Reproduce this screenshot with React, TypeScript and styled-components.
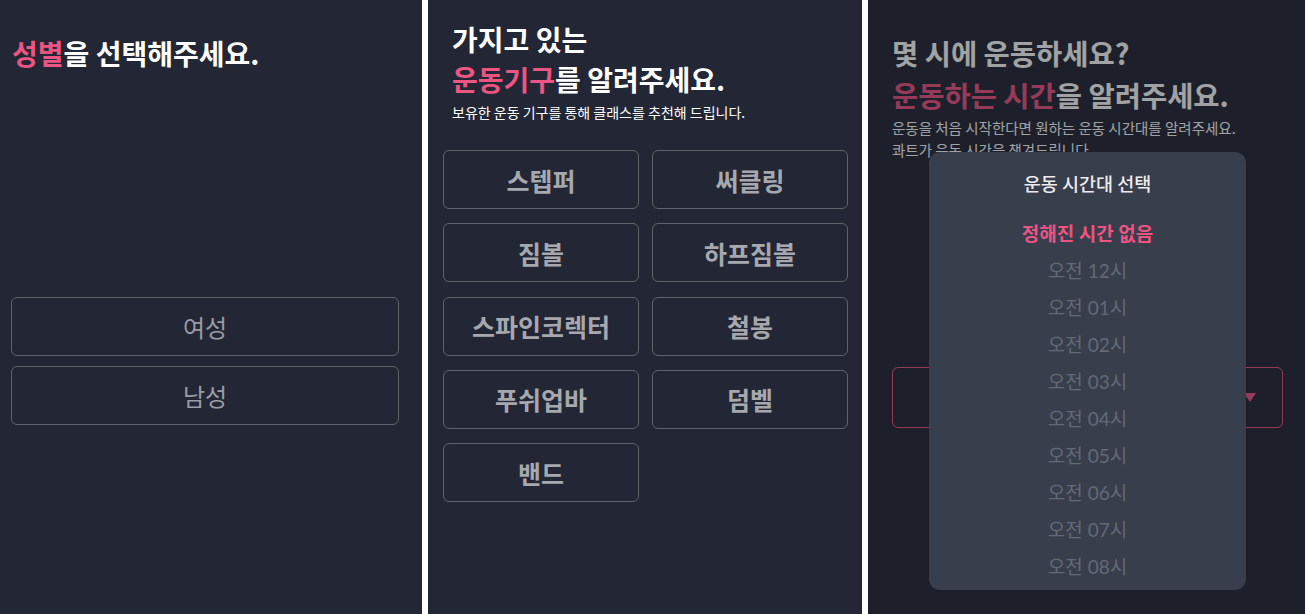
import React from 'react'
import styled, { createGlobalStyle } from 'styled-components'

const GlobalStyle = createGlobalStyle`
  html, body {
    margin: 0;
    padding: 0;
    background: #ffffff;
    font-family: 'Noto Sans CJK KR', 'Noto Sans', sans-serif;
  }
`

const pink = '#ec5482'

const Screens = styled('main')`
  display: grid;
  grid-template-columns: 422px 434px 437px;
  column-gap: 6px;
  width: 1307px;
  height: 614px;
  overflow: hidden;
`

const Panel = styled('section')`
  position: relative;
  background: #232735;
  height: 614px;
  overflow: hidden;
  display: flex;
  flex-direction: column;
`

interface ITitle {
  size: number
  lineHeight: number
}
const Title = styled('h1')<ITitle>`
  margin: 0;
  color: #ffffff;
  font-size: ${(props) => props.size}px;
  line-height: ${(props) => props.lineHeight}px;
  font-weight: 700;
  white-space: nowrap;
`

const Accent = styled('span')`
  color: ${pink};
`

const OptionButton = styled('button')<{ bold?: boolean }>`
  display: flex;
  align-items: center;
  justify-content: center;
  height: 59px;
  box-sizing: border-box;
  background: transparent;
  border: 1.5px solid #5f636d;
  border-radius: 6px;
  color: ${(props) => (props.bold ? '#a6a8ae' : '#999ca4')};
  font-family: 'Noto Sans CJK KR', sans-serif;
  font-size: ${(props) => (props.bold ? 25 : 24)}px;
  font-weight: ${(props) => (props.bold ? 700 : 400)};
`

/* panel 1 */
const GenderBody = styled('div')`
  padding: 36px 23px 0 11px;
  display: flex;
  flex-direction: column;
`
const GenderTitle = styled(Title)`
  padding-left: 1px;
`
const GenderList = styled('div')`
  margin-top: 227px;
  display: flex;
  flex-direction: column;
  gap: 10px;
`

/* panel 2 */
const EquipBody = styled('div')`
  padding: 19px 14px 0 15px;
  display: flex;
  flex-direction: column;
`
const EquipHead = styled('div')`
  padding-left: 9px;
  display: flex;
  flex-direction: column;
`
const EquipSub = styled('p')`
  margin: 3px 0 0;
  color: #ffffff;
  font-size: 14px;
  line-height: 20px;
  white-space: nowrap;
`
const EquipGrid = styled('div')`
  margin-top: 28px;
  display: grid;
  grid-template-columns: 1fr 1fr;
  column-gap: 13px;
  row-gap: 14.3px;
`

/* panel 3 */
const TimeBody = styled('div')`
  padding: 32px 22px 0 24px;
  display: flex;
  flex-direction: column;
`
const TimeSub = styled('p')`
  margin: 1px 0 0;
  color: #ffffff;
  font-size: 14.5px;
  line-height: 22px;
  white-space: nowrap;
`
const SelectBox = styled('div')`
  margin-top: 206px;
  height: 61px;
  box-sizing: border-box;
  border: 1.5px solid ${pink};
  border-radius: 6px;
  display: flex;
  align-items: center;
  justify-content: flex-end;
  padding-right: 26px;
`
const Caret = styled('span')`
  width: 0;
  height: 0;
  border-left: 6px solid transparent;
  border-right: 6px solid transparent;
  border-top: 9px solid ${pink};
`

const Dim = styled('div')`
  position: absolute;
  inset: 0;
  background: rgba(20, 22, 28, 0.4);
`

const Sheet = styled('div')`
  position: absolute;
  left: 61px;
  top: 152px;
  width: 317px;
  height: 438px;
  background: #393e4c;
  border-radius: 11px;
  display: flex;
  flex-direction: column;
  align-items: center;
  overflow: hidden;
`
const SheetTitle = styled('h2')`
  margin: 19px 0 0;
  color: #ececee;
  font-size: 18.5px;
  line-height: 24px;
  font-weight: 500;
`
const TimeList = styled('ul')`
  list-style: none;
  margin: 26px 0 0;
  padding: 0;
  display: flex;
  flex-direction: column;
  align-items: center;
`
const TimeItem = styled('li')<{ active?: boolean }>`
  height: 37px;
  line-height: 26px;
  font-family: Lato, 'Noto Sans CJK KR', sans-serif;
  font-size: 19px;
  font-weight: ${(props) => (props.active ? 700 : 400)};
  color: ${(props) => (props.active ? pink : '#636977')};
  white-space: nowrap;
`

const equipment = ['스텝퍼', '써클링', '짐볼', '하프짐볼', '스파인코렉터', '철봉', '푸쉬업바', '덤벨', '밴드']
const hours = ['12', '01', '02', '03', '04', '05', '06', '07', '08']

export default function App() {
  return (
    <>
      <GlobalStyle />
      <Screens>
        <Panel>
          <GenderBody>
            <GenderTitle size={28} lineHeight={34}>
              <Accent>성별</Accent>을 선택해주세요.
            </GenderTitle>
            <GenderList>
              <OptionButton>여성</OptionButton>
              <OptionButton>남성</OptionButton>
            </GenderList>
          </GenderBody>
        </Panel>

        <Panel>
          <EquipBody>
            <EquipHead>
              <Title size={28} lineHeight={40}>가지고 있는</Title>
              <Title size={28} lineHeight={40}>
                <Accent>운동기구</Accent>를 알려주세요.
              </Title>
              <EquipSub>보유한 운동 기구를 통해 클래스를 추천해 드립니다.</EquipSub>
            </EquipHead>
            <EquipGrid>
              {equipment.map((name) => (
                <OptionButton key={name} bold>
                  {name}
                </OptionButton>
              ))}
            </EquipGrid>
          </EquipBody>
        </Panel>

        <Panel>
          <TimeBody>
            <Title size={28.5} lineHeight={42}>몇 시에 운동하세요?</Title>
            <Title size={28.5} lineHeight={42}>
              <Accent>운동하는 시간</Accent>을 알려주세요.
            </Title>
            <TimeSub>
              운동을 처음 시작한다면 원하는 운동 시간대를 알려주세요.
              <br />
              콰트가 운동 시간을 챙겨드립니다.
            </TimeSub>
            <SelectBox>
              <Caret />
            </SelectBox>
          </TimeBody>
          <Dim />
          <Sheet>
            <SheetTitle>운동 시간대 선택</SheetTitle>
            <TimeList>
              <TimeItem active>정해진 시간 없음</TimeItem>
              {hours.map((h) => (
                <TimeItem key={h}>오전 {h}시</TimeItem>
              ))}
            </TimeList>
          </Sheet>
        </Panel>
      </Screens>
    </>
  )
}
